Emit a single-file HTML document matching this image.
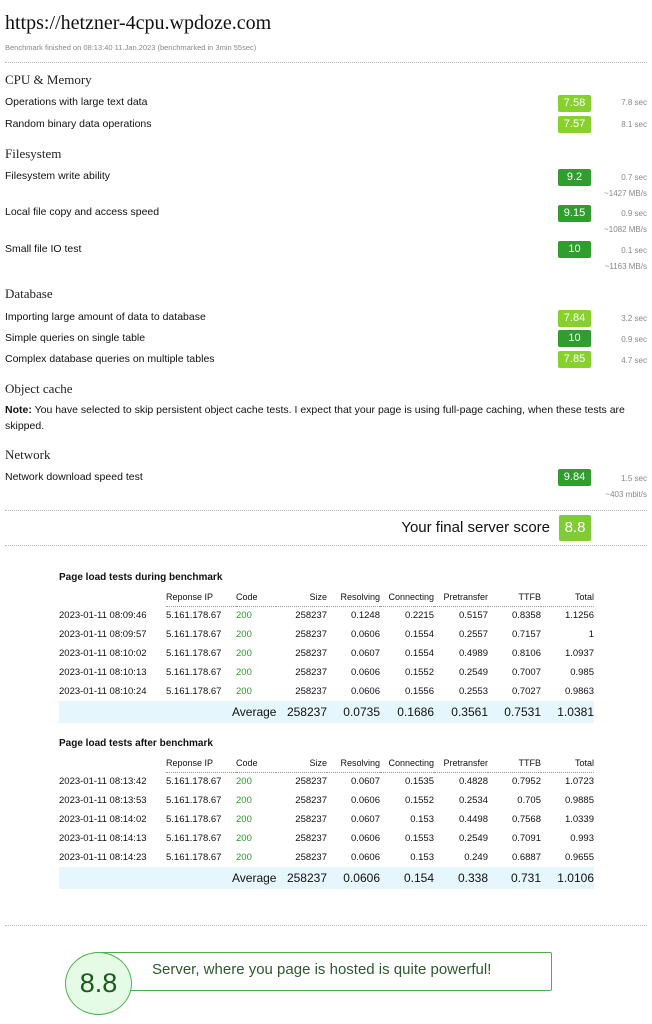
<!DOCTYPE html>
<html><head><meta charset="utf-8"><style>
*{margin:0;padding:0;box-sizing:border-box}
body{width:652px;height:1024px;background:#fff;position:relative;font-family:"Liberation Sans",sans-serif;color:#111;overflow:hidden}
.a{position:absolute;white-space:nowrap}
.h{font-family:"Liberation Serif",serif;font-size:13px;color:#222}
.r{font-size:10.5px;left:5px}
.b{position:absolute;left:558px;width:33px;height:17px;border-radius:2px;color:#fff;font-size:11px;text-align:center;line-height:17px}
.lg{background:#86d12c}.dg{background:#2f9e2f}
.s{font-size:8px;color:#888;right:5px;text-align:right}
.dot{position:absolute;left:5px;right:5px;border-top:1px dotted #bbb;height:0}
table{position:absolute;left:59px;width:535px;border-collapse:collapse;table-layout:fixed;font-size:9.5px}
td{padding:0;height:19px;white-space:nowrap;text-align:right}
td:nth-child(1),td:nth-child(2),td:nth-child(3){text-align:left}
tr.hd td{height:18px;font-size:9px}
tr.hd td:not(:first-child){border-bottom:1px dotted #999}
td.g{color:#2a9a2a}
tr.av td{background:#e5f6fd;height:22px;font-size:12px}
.tt{font-size:10px;font-weight:bold;left:59px}
</style></head><body>
<div class="a" style="left:5px;top:12px;font-family:'Liberation Serif',serif;font-size:20px">https://hetzner-4cpu.wpdoze.com</div>
<div class="a" style="left:5px;top:43px;font-size:7.5px;color:#888">Benchmark finished on 08:13:40 11.Jan.2023 (benchmarked in 3min 55sec)</div>
<div class="dot" style="top:62px"></div>

<div class="a h" style="left:5px;top:72px">CPU &amp; Memory</div>
<div class="a r" style="top:96px">Operations with large text data</div><div class="b lg" style="top:95px">7.58</div><div class="a s" style="top:98px">7.8 sec</div>
<div class="a r" style="top:118px">Random binary data operations</div><div class="b lg" style="top:116px">7.57</div><div class="a s" style="top:120px">8.1 sec</div>

<div class="a h" style="left:5px;top:146px">Filesystem</div>
<div class="a r" style="top:170px">Filesystem write ability</div><div class="b dg" style="top:169px">9.2</div><div class="a s" style="top:173px">0.7 sec</div><div class="a s" style="top:189px">~1427 MB/s</div>
<div class="a r" style="top:206px">Local file copy and access speed</div><div class="b dg" style="top:205px">9.15</div><div class="a s" style="top:209px">0.9 sec</div><div class="a s" style="top:225px">~1082 MB/s</div>
<div class="a r" style="top:243px">Small file IO test</div><div class="b dg" style="top:241px">10</div><div class="a s" style="top:246px">0.1 sec</div><div class="a s" style="top:262px">~1163 MB/s</div>

<div class="a h" style="left:5px;top:286px">Database</div>
<div class="a r" style="top:311px">Importing large amount of data to database</div><div class="b lg" style="top:310px">7.84</div><div class="a s" style="top:314px">3.2 sec</div>
<div class="a r" style="top:332px">Simple queries on single table</div><div class="b dg" style="top:330px">10</div><div class="a s" style="top:335px">0.9 sec</div>
<div class="a r" style="top:353px">Complex database queries on multiple tables</div><div class="b lg" style="top:351px">7.85</div><div class="a s" style="top:356px">4.7 sec</div>

<div class="a h" style="left:5px;top:381px">Object cache</div>
<div class="a r" style="top:404px"><b>Note:</b> You have selected to skip persistent object cache tests. I expect that your page is using full-page caching, when these tests are</div>
<div class="a r" style="top:420px">skipped.</div>

<div class="a h" style="left:5px;top:447px">Network</div>
<div class="a r" style="top:471px">Network download speed test</div><div class="b dg" style="top:469px">9.84</div><div class="a s" style="top:474px">1.5 sec</div><div class="a s" style="top:490px">~403 mbit/s</div>

<div class="dot" style="top:510px"></div>
<div class="a" style="right:102px;top:519px;font-size:15px">Your final server score</div>
<div class="b" style="top:515px;left:559px;width:32px;height:26px;line-height:26px;font-size:15px;background:#7fcc35">8.8</div>
<div class="dot" style="top:545px"></div>

<div class="a tt" style="top:572px">Page load tests during benchmark</div>
<table style="top:588px">
<colgroup><col style="width:107px"><col style="width:70px"><col style="width:40px"><col style="width:51px"><col style="width:53px"><col style="width:54px"><col style="width:54px"><col style="width:53px"><col style="width:53px"></colgroup>
<tr class="hd"><td></td><td>Reponse IP</td><td>Code</td><td>Size</td><td>Resolving</td><td>Connecting</td><td>Pretransfer</td><td>TTFB</td><td>Total</td></tr>
<tr><td>2023-01-11 08:09:46</td><td>5.161.178.67</td><td class="g">200</td><td>258237</td><td>0.1248</td><td>0.2215</td><td>0.5157</td><td>0.8358</td><td>1.1256</td></tr>
<tr><td>2023-01-11 08:09:57</td><td>5.161.178.67</td><td class="g">200</td><td>258237</td><td>0.0606</td><td>0.1554</td><td>0.2557</td><td>0.7157</td><td>1</td></tr>
<tr><td>2023-01-11 08:10:02</td><td>5.161.178.67</td><td class="g">200</td><td>258237</td><td>0.0607</td><td>0.1554</td><td>0.4989</td><td>0.8106</td><td>1.0937</td></tr>
<tr><td>2023-01-11 08:10:13</td><td>5.161.178.67</td><td class="g">200</td><td>258237</td><td>0.0606</td><td>0.1552</td><td>0.2549</td><td>0.7007</td><td>0.985</td></tr>
<tr><td>2023-01-11 08:10:24</td><td>5.161.178.67</td><td class="g">200</td><td>258237</td><td>0.0606</td><td>0.1556</td><td>0.2553</td><td>0.7027</td><td>0.9863</td></tr>
<tr class="av"><td></td><td></td><td style="overflow:visible"><span style="position:relative;left:-4px">Average</span></td><td>258237</td><td>0.0735</td><td>0.1686</td><td>0.3561</td><td>0.7531</td><td>1.0381</td></tr>
</table>

<div class="a tt" style="top:738px">Page load tests after benchmark</div>
<table style="top:754px">
<colgroup><col style="width:107px"><col style="width:70px"><col style="width:40px"><col style="width:51px"><col style="width:53px"><col style="width:54px"><col style="width:54px"><col style="width:53px"><col style="width:53px"></colgroup>
<tr class="hd"><td></td><td>Reponse IP</td><td>Code</td><td>Size</td><td>Resolving</td><td>Connecting</td><td>Pretransfer</td><td>TTFB</td><td>Total</td></tr>
<tr><td>2023-01-11 08:13:42</td><td>5.161.178.67</td><td class="g">200</td><td>258237</td><td>0.0607</td><td>0.1535</td><td>0.4828</td><td>0.7952</td><td>1.0723</td></tr>
<tr><td>2023-01-11 08:13:53</td><td>5.161.178.67</td><td class="g">200</td><td>258237</td><td>0.0606</td><td>0.1552</td><td>0.2534</td><td>0.705</td><td>0.9885</td></tr>
<tr><td>2023-01-11 08:14:02</td><td>5.161.178.67</td><td class="g">200</td><td>258237</td><td>0.0607</td><td>0.153</td><td>0.4498</td><td>0.7568</td><td>1.0339</td></tr>
<tr><td>2023-01-11 08:14:13</td><td>5.161.178.67</td><td class="g">200</td><td>258237</td><td>0.0606</td><td>0.1553</td><td>0.2549</td><td>0.7091</td><td>0.993</td></tr>
<tr><td>2023-01-11 08:14:23</td><td>5.161.178.67</td><td class="g">200</td><td>258237</td><td>0.0606</td><td>0.153</td><td>0.249</td><td>0.6887</td><td>0.9655</td></tr>
<tr class="av"><td></td><td></td><td style="overflow:visible"><span style="position:relative;left:-4px">Average</span></td><td>258237</td><td>0.0606</td><td>0.154</td><td>0.338</td><td>0.731</td><td>1.0106</td></tr>
</table>

<div class="dot" style="top:925px"></div>
<div class="a" style="left:100px;top:952px;width:452px;height:39px;border:1px solid #4cb04c;border-radius:2px"></div>
<div class="a" style="left:152px;top:961px;font-size:15px;color:#2d5a2d">Server, where you page is hosted is quite powerful!</div>
<div class="a" style="left:65px;top:952px;width:67px;height:63px;border:1px solid #4cb04c;border-radius:50%;background:#e6fbe6;text-align:center;line-height:61px;font-size:27px;color:#1a5a1a">8.8</div>
</body></html>
